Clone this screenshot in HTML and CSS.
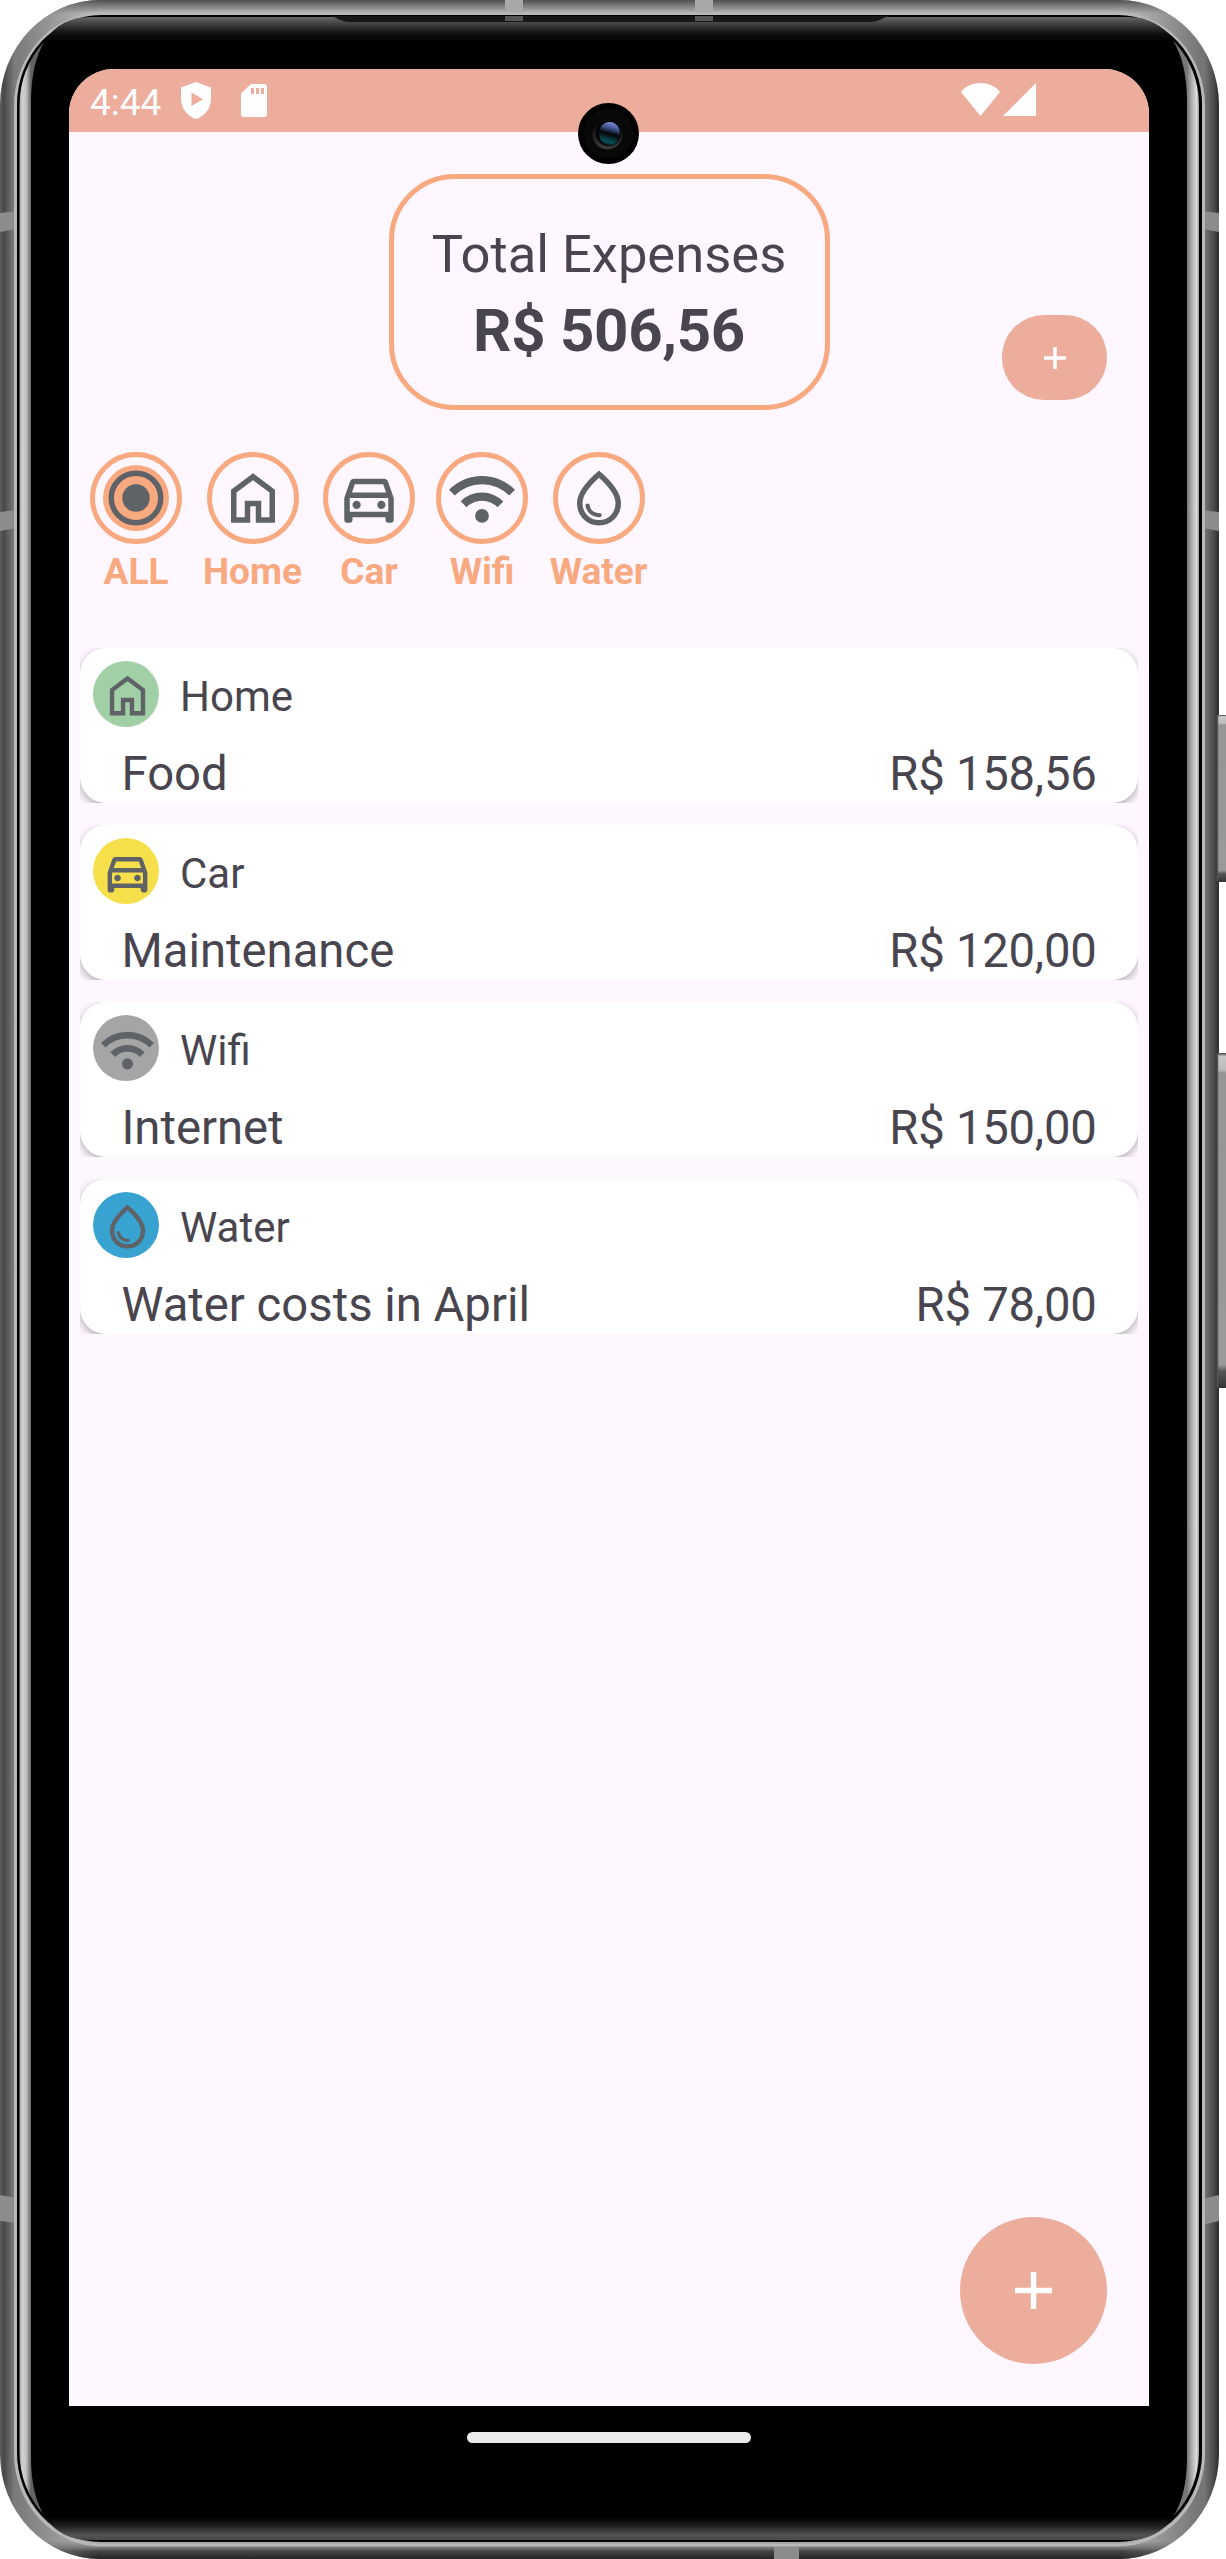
FILE: index.html
```
<!DOCTYPE html>
<html lang="en">
<head>
<meta charset="utf-8">
<title>Expenses</title>
<link rel="stylesheet" href="styles.css">
</head>
<body>
<svg class="symbols" width="0" height="0" aria-hidden="true">
  <symbol id="i-all" viewBox="0 0 24 24"><circle cx="12" cy="12" r="12" class="all-disc"/><circle cx="12" cy="12" r="9" fill="none" stroke="currentColor" stroke-width="2"/><circle cx="12" cy="12" r="5"/></symbol>
  <symbol id="i-home" viewBox="0 0 24 24"><path d="M6 19h3v-6h6v6h3v-9l-6-4.5L6 10v9zm-2 2V9l8-6 8 6v12h-7v-6h-2v6H4z"/></symbol>
  <symbol id="i-car" viewBox="0 -960 960 960"><path d="M240-200v40q0 17-11.500 28.500T200-120h-40q-17 0-28.500-11.500T120-160v-320l84-240q6-18 21.500-29t34.500-11h440q19 0 34.500 11t21.500 29l84 240v320q0 17-11.500 28.500T800-120h-40q-17 0-28.500-11.500T720-160v-40H240Zm-8-360h496l-42-120H274l-42 120Zm68 240q25 0 42.500-17.500T360-380q0-25-17.500-42.500T300-440q-25 0-42.500 17.500T240-380q0 25 17.500 42.500T300-320Zm360 0q25 0 42.500-17.500T720-380q0-25-17.500-42.500T660-440q-25 0-42.500 17.500T600-380q0 25 17.500 42.500T660-320Zm-460 40h560v-200H200v200Z"/></symbol>
  <symbol id="i-wifi" viewBox="0 -960 960 960"><path d="M480-120q-42 0-71-29t-29-71q0-42 29-71t71-29q42 0 71 29t29 71q0 42-29 71t-71 29ZM254-346l-84-86q59-59 138.500-93.500T480-560q92 0 171.500 35T790-430l-84 84q-44-44-102-69t-124-25q-66 0-124 25t-102 69ZM84-516 0-600q92-94 215-147t265-53q142 0 265 53t215 147l-84 84q-77-77-178.500-120.500T480-680q-116 0-217.500 43.500T84-516Z"/></symbol>
  <symbol id="i-water" viewBox="0 -960 960 960"><path d="M491-200q12-1 20.500-9.500T520-230q0-14-9-22.500t-23-7.500q-41 3-87-22.500T343-375q-2-11-10.500-18t-19.500-7q-14 0-23 10.500t-6 24.500q17 91 80 130t127 35ZM480-80q-137 0-228.500-94T160-408q0-100 79.500-217.500T480-880q161 137 240.500 254.500T800-408q0 140-91.500 234T480-80Zm0-80q104 0 172-70.500T720-408q0-73-60.500-165T480-774Q361-665 300.500-573T240-408q0 107 68 177.500T480-160Z"/></symbol>
</svg>

<div class="device">
  <svg class="frame" viewBox="0 0 1226 2559" aria-hidden="true">
    <defs>
      <linearGradient id="sides" gradientUnits="userSpaceOnUse" x1="0" x2="1219" y1="0" y2="0">
        <stop offset="0" stop-color="#606060"/><stop offset=".003" stop-color="#484848"/><stop offset=".012" stop-color="#7c7c7c"/>
        <stop offset=".988" stop-color="#757575"/><stop offset=".996" stop-color="#484848"/><stop offset="1" stop-color="#2c2c2c"/>
      </linearGradient>
      <linearGradient id="ends" gradientUnits="userSpaceOnUse" x1="0" x2="0" y1="0" y2="2559">
        <stop offset="0" stop-color="#505050"/><stop offset=".0035" stop-color="#949494"/><stop offset=".0055" stop-color="#c0c0c0"/>
        <stop offset=".993" stop-color="#b4b4b4"/><stop offset=".9955" stop-color="#7a7a7a"/><stop offset=".997" stop-color="#444"/><stop offset="1" stop-color="#252525"/>
      </linearGradient>
      <linearGradient id="fade" gradientUnits="userSpaceOnUse" x1="0" x2="1219" y1="0" y2="0">
        <stop offset=".015" stop-color="#000"/><stop offset=".08" stop-color="#fff"/><stop offset=".92" stop-color="#fff"/><stop offset=".985" stop-color="#000"/>
      </linearGradient>
      <mask id="endMask" maskUnits="userSpaceOnUse" x="0" y="0" width="1219" height="2559"><path fill="url(#fade)" d="M0 0H1219V2559H0z"/></mask>
      <linearGradient id="silver" gradientUnits="userSpaceOnUse" x1="19" x2="1199" y1="0" y2="0">
        <stop offset="0" stop-color="#8c8c8c"/><stop offset=".0025" stop-color="#d2d2d2"/><stop offset=".006" stop-color="#c4c4c4"/><stop offset=".0102" stop-color="#626262"/>
        <stop offset=".9898" stop-color="#777"/><stop offset=".994" stop-color="#b0b0b0"/><stop offset=".998" stop-color="#dcdcdc"/><stop offset="1" stop-color="#999"/>
      </linearGradient>
      <linearGradient id="glass" gradientUnits="userSpaceOnUse" x1="0" x2="0" y1="17" y2="2540">
        <stop offset="0" stop-color="#686868"/><stop offset=".003" stop-color="#3c3c3c"/><stop offset=".0065" stop-color="#101010"/><stop offset=".01" stop-color="#000"/>
        <stop offset=".991" stop-color="#000"/><stop offset=".9945" stop-color="#202020"/><stop offset=".998" stop-color="#535353"/><stop offset="1" stop-color="#484848"/>
      </linearGradient>
      <linearGradient id="btn" x1="0" x2="0" y1="0" y2="1">
        <stop offset="0" stop-color="#444"/><stop offset=".01" stop-color="#c8c8c8"/><stop offset=".05" stop-color="#bbb"/><stop offset=".06" stop-color="#959595"/>
        <stop offset=".93" stop-color="#999"/><stop offset=".95" stop-color="#555"/><stop offset="1" stop-color="#333"/>
      </linearGradient>
    </defs>
    <rect width="1219" height="2559" rx="100" ry="105" fill="url(#sides)"/>
    <rect width="1219" height="2559" rx="100" ry="105" fill="url(#ends)" mask="url(#endMask)"/>
    <g fill="#8c8c8c">
      <path d="M0 213L17 211V229L0 232zM0 512L17 510V528L0 531zM0 2195L17 2198V2223L0 2221z"/>
      <path d="M1219 213L1202 211V229L1219 232zM1219 512L1202 510V528L1219 531zM1219 2195L1202 2199V2225L1219 2221z"/>
      <path fill="#a8a8a8" d="M505 0h18v17h-18zM695 0h18v17h-18z"/>
      <path d="M774 2543h25v16h-25z"/>
    </g>
    <rect x="15.500" y="14" width="1188" height="2531" rx="86" ry="92" fill="none" stroke="#b8b8b8" stroke-width="3"/>
    <rect x="17" y="15" width="1185" height="2527" rx="84" ry="90" fill="#000"/>
    <rect x="19.500" y="17" width="1179.500" height="2523" rx="82" ry="88" fill="url(#silver)"/>
    <path fill="url(#glass)" d="M90 17H1128C1168 17 1187 50 1187 102V2457C1187 2508 1168 2540 1128 2540H90C50 2540 31 2508 31 2457V102C31 50 50 17 90 17z"/>
    <path fill="#171717" d="M328 16H892C882 17 880 22 870 22H350C340 22 338 17 328 16z"/>
    <path fill="#555" d="M505 16h18v5h-18zM695 16h18v5h-18z"/>
    <rect x="1217" y="715" width="9" height="167" fill="url(#btn)"/>
    <rect x="1217" y="1053" width="9" height="335" fill="url(#btn)"/>
    <path d="M1217.500 716V881M1217.500 1054V1387" stroke="#555" stroke-width="1.500"/>
  </svg>

  <main class="screen">
    <div class="app">
      <div class="statusbar">
        <span class="clock">4:44</span>
        <svg class="shield" viewBox="0 0 30 37"><path fill-rule="evenodd" d="M15 0L30 5.500V17C30 26 24 34 15 37C6 34 0 26 0 17V5.500zM10.500 10.500V24L22 17.300z"/></svg>
        <svg class="sdcard" viewBox="0 0 26 33"><path fill-rule="evenodd" d="M10 0H23a3 3 0 0 1 3 3V30a3 3 0 0 1-3 3H3a3 3 0 0 1-3-3V9.500zM10 4v6h3V4zm5 0v6h3V4zm5 0v6h3V4z"/></svg>
        <svg class="wifi" viewBox="0 0 39 33"><path d="M0 9C9-3 30-3 39 9L19.500 33z"/></svg>
        <svg class="signal" viewBox="0 0 33 33"><path d="M33 0V33H0z"/></svg>
      </div>
      <svg class="camera" viewBox="-30.500 -30.500 61 61">
        <defs><linearGradient id="lens" x1=".6" y1="0" x2=".35" y2="1"><stop offset="0" stop-color="#7f8fe0"/><stop offset=".28" stop-color="#3c4f86"/><stop offset=".5" stop-color="#020508"/><stop offset=".85" stop-color="#0a5058"/><stop offset="1" stop-color="#021a1c"/></linearGradient>
        <linearGradient id="ring" x1="0" y1="0" x2="0" y2="1"><stop offset=".2" stop-color="#0a0a0a"/><stop offset="1" stop-color="#3c3c3c"/></linearGradient></defs>
        <circle r="30.500"/><circle r="25" fill="#080808"/><circle cx="-1" cy="1" r="15" fill="url(#ring)"/><circle cx="0" cy="0" r="12.500" fill="#030303"/><ellipse cx="1" cy="0" rx="10.500" ry="11.500" fill="url(#lens)"/>
      </svg>
      <header class="summary">
        <div class="total">
          <div class="total-label">Total Expenses</div>
          <div class="total-value">R$ 506,56</div>
        </div>
        <button class="add-small" aria-label="Add category"><svg viewBox="0 0 22 22"><path d="M11 0V22M0 11H22"/></svg></button>
      </header>
      <nav class="filters">
        <div class="filter"><span class="ring"><svg><use href="#i-all"/></svg></span><span>ALL</span></div>
        <div class="filter wide"><span class="ring"><svg><use href="#i-home"/></svg></span><span>Home</span></div>
        <div class="filter"><span class="ring"><svg><use href="#i-car"/></svg></span><span>Car</span></div>
        <div class="filter"><span class="ring"><svg><use href="#i-wifi"/></svg></span><span>Wifi</span></div>
        <div class="filter wide"><span class="ring"><svg><use href="#i-water"/></svg></span><span>Water</span></div>
      </nav>
      <section class="list">
        <div class="slot"><article class="card">
          <div class="category"><span class="dot green"><svg><use href="#i-home"/></svg></span><span class="name">Home</span></div>
          <div class="entry"><span>Food</span><span class="amount">R$ 158,56</span></div>
        </article></div>
        <div class="slot"><article class="card">
          <div class="category"><span class="dot yellow"><svg><use href="#i-car"/></svg></span><span class="name">Car</span></div>
          <div class="entry"><span>Maintenance</span><span class="amount">R$ 120,00</span></div>
        </article></div>
        <div class="slot"><article class="card">
          <div class="category"><span class="dot gray"><svg><use href="#i-wifi"/></svg></span><span class="name">Wifi</span></div>
          <div class="entry"><span>Internet</span><span class="amount">R$ 150,00</span></div>
        </article></div>
        <div class="slot"><article class="card">
          <div class="category"><span class="dot blue"><svg><use href="#i-water"/></svg></span><span class="name">Water</span></div>
          <div class="entry"><span>Water costs in April</span><span class="amount">R$ 78,00</span></div>
        </article></div>
      </section>
      <button class="fab" aria-label="Add expense"><svg viewBox="0 0 37 37"><path d="M18.500 0V37M0 18.500H37"/></svg></button>
    </div>
    <div class="gesture"></div>
  </main>
</div>
</body>
</html>
```
FILE: styles.css
```
* { box-sizing: border-box; }
body { margin: 0; background: #fff; font-family: Roboto, "Liberation Sans", sans-serif; color: #49454f; }
svg { display: block; fill: currentColor; }
button { border: 0; padding: 0; color: #fff; background: #ecad9c; display: flex; align-items: center; justify-content: center; }
.symbols { position: absolute; }
.all-disc { fill: #f9a97f; }

.device { display: grid; width: 1226px; height: 2559px; }
.frame, .screen { grid-area: 1 / 1; }
.frame { width: 1226px; height: 2559px; }
.screen { width: 1080px; margin: 69px 0 0 69px; z-index: 1; }
.app { position: relative; height: 2337px; display: flex; flex-direction: column; background: #fef7ff; border-radius: 45px 45px 0 0; overflow: hidden; }

.statusbar { height: 63px; flex: none; display: flex; align-items: flex-start; padding: 13px 113px 0 21px; background: #ecad9c; color: #fff; }
.clock { width: 91px; font-size: 37px; line-height: 41px; }
.shield { width: 30px; height: 37px; }
.sdcard { width: 26px; height: 33px; margin: 2px 0 0 30px; }
.wifi { width: 39px; height: 33px; margin: 1px 3px 0 auto; }
.signal { width: 33px; height: 33px; margin-top: 1px; }
.camera { position: absolute; left: 509px; top: 34px; width: 61px; height: 61px; fill: #000; }

.summary { flex: none; display: grid; grid-template-columns: 1fr 441px 1fr; margin-top: 42px; height: 236px; }
.total { grid-column: 2; border: 5px solid #f9a97f; border-radius: 66px; padding-top: 44px; text-align: center; white-space: nowrap; }
.total-label { font-size: 52.500px; line-height: 62px; }
.total-value { margin-top: 10px; font-size: 60px; line-height: 71px; font-weight: 700; letter-spacing: -.3px; }
.add-small { align-self: end; justify-self: end; width: 105px; height: 85px; margin: 0 42px 10px 0; border-radius: 42px; }
.add-small svg { width: 22px; height: 22px; stroke: #fff; stroke-width: 3.500; }

.filters { flex: none; display: flex; gap: 21px; height: 141px; margin: 42px 0 0 21px; color: #f9a97f; font-size: 37px; line-height: 43px; font-weight: 700; }
.filter { width: 92px; display: flex; flex-direction: column; align-items: center; gap: 5.500px; white-space: nowrap; }
.wide { width: 99px; }
.ring { width: 92px; height: 92px; border: 5px solid #f9a97f; border-radius: 50%; display: flex; align-items: center; justify-content: center; color: #5f6368; }
.ring svg { width: 66px; height: 66px; }

.list { flex: none; display: flex; flex-direction: column; gap: 22px; margin: 55px 11px 0; }
.slot { height: 155px; overflow: hidden; }
.card { height: 155px; padding: 13px 41.500px 0 13px; background: #fff; border-radius: 26px; box-shadow: 0 3px 8px rgba(0, 0, 0, .32); }
.category { display: flex; gap: 21px; height: 66px; font-size: 42px; line-height: 50px; }
.name { margin-top: 11px; }
.dot { width: 66px; height: 66px; padding: 7.500px 0 0 8px; border-radius: 50%; color: #5f6368; }
.dot svg { width: 53px; height: 53px; }
.green { background: #a1cfa6; }
.yellow { background: #f7df4b; }
.gray { background: #a5a5a5; }
.blue { background: #38a3d0; }
.entry { display: flex; justify-content: space-between; margin: 19px 0 0 28.500px; font-size: 47.250px; line-height: 56px; white-space: nowrap; }
.amount { letter-spacing: -.25px; }

.fab { width: 147px; height: 147px; margin: auto 42px 42px auto; border-radius: 50%; }
.fab svg { width: 37px; height: 37px; stroke: #fff; stroke-width: 5.500; }

.gesture { width: 284px; height: 11px; margin: 26px auto 0; border-radius: 6px; background: #ebebeb; }
```
